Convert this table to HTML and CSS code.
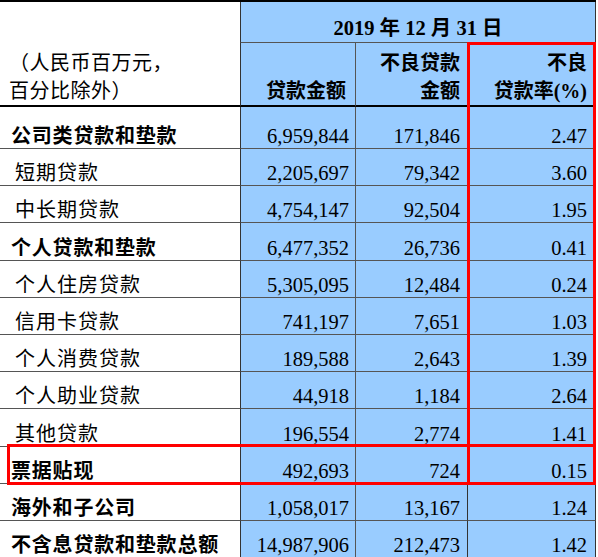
FILE: index.html
```html
<!DOCTYPE html>
<html lang="zh-CN">
<head>
    <meta charset="UTF-8">
    <meta name="viewport" content="width=device-width, initial-scale=1.0">
    <title>贷款质量</title>
    <link rel="stylesheet" href="styles.css">
</head>
<body>
    <div class="sheet">
        <div class="grid">
            <!-- Header -->
            <div class="cell head-label">（人民币百万元，<br>百分比除外）</div>
            <div class="cell blue date">2019 年 12 月 31 日</div>
            <div class="cell blue head c1">贷款金额</div>
            <div class="cell blue head c2">不良贷款<br>金额</div>
            <div class="cell blue head c3">不良<br>贷款率(%)</div>

            <!-- Rows -->
            <div class="cell label bold">公司类贷款和垫款</div>
            <div class="cell blue num c1">6,959,844</div>
            <div class="cell blue num c2">171,846</div>
            <div class="cell blue num c3">2.47</div>

            <div class="cell label">短期贷款</div>
            <div class="cell blue num c1">2,205,697</div>
            <div class="cell blue num c2">79,342</div>
            <div class="cell blue num c3">3.60</div>

            <div class="cell label">中长期贷款</div>
            <div class="cell blue num c1">4,754,147</div>
            <div class="cell blue num c2">92,504</div>
            <div class="cell blue num c3">1.95</div>

            <div class="cell label bold">个人贷款和垫款</div>
            <div class="cell blue num c1">6,477,352</div>
            <div class="cell blue num c2">26,736</div>
            <div class="cell blue num c3">0.41</div>

            <div class="cell label">个人住房贷款</div>
            <div class="cell blue num c1">5,305,095</div>
            <div class="cell blue num c2">12,484</div>
            <div class="cell blue num c3">0.24</div>

            <div class="cell label">信用卡贷款</div>
            <div class="cell blue num c1">741,197</div>
            <div class="cell blue num c2">7,651</div>
            <div class="cell blue num c3">1.03</div>

            <div class="cell label">个人消费贷款</div>
            <div class="cell blue num c1">189,588</div>
            <div class="cell blue num c2">2,643</div>
            <div class="cell blue num c3">1.39</div>

            <div class="cell label">个人助业贷款</div>
            <div class="cell blue num c1">44,918</div>
            <div class="cell blue num c2">1,184</div>
            <div class="cell blue num c3">2.64</div>

            <div class="cell label">其他贷款</div>
            <div class="cell blue num c1">196,554</div>
            <div class="cell blue num c2">2,774</div>
            <div class="cell blue num c3">1.41</div>

            <div class="cell label bold">票据贴现</div>
            <div class="cell blue num c1">492,693</div>
            <div class="cell blue num c2">724</div>
            <div class="cell blue num c3">0.15</div>

            <div class="cell label bold">海外和子公司</div>
            <div class="cell blue num c1">1,058,017</div>
            <div class="cell blue num c2">13,167</div>
            <div class="cell blue num c3">1.24</div>

            <div class="cell label bold last">不含息贷款和垫款总额</div>
            <div class="cell blue num c1 last">14,987,906</div>
            <div class="cell blue num c2 last">212,473</div>
            <div class="cell blue num c3 last">1.42</div>
        </div>

        <!-- Red highlight boxes -->
        <div class="mark mark-col"></div>
        <div class="mark mark-row"></div>
    </div>
</body>
</html>
```

FILE: styles.css
```css
/* Base */
* {
    margin: 0;
    padding: 0;
    box-sizing: border-box;
}

body {
    background-color: #fff;
    color: #000;
    font-family: "Liberation Serif", "Noto Sans CJK SC", serif;
}

.sheet {
    position: relative;
    width: 598px;
    height: 557px;
    overflow: hidden;
}

/* Grid */
.grid {
    display: grid;
    grid-template-columns: 240px 115px 112px 129px;
    grid-template-rows: 41px 64px 42px 37px 37px 38px 37px 37px 37px 37px 38px 37px 37px 36px;
    width: 596px;
    border-top: 2px solid #000;
}

.cell {
    display: flex;
    align-items: flex-end;
    border-bottom: 1px solid #555;
    font-size: 20px;
    line-height: 24px;
    white-space: nowrap;
}

.cell.last {
    border-bottom: none;
}

.blue {
    background-color: #99ccff;
    justify-content: flex-end;
    text-align: right;
}

.c1 {
    border-left: 1px solid #333;
    padding-right: 6px;
}

.c2 {
    border-left: 1px solid #555;
    padding-right: 7px;
}

.c3 {
    border-left: 1px solid #333;
    border-right: 1px solid #333;
    padding-right: 8px;
}

/* Header */
.head-label {
    grid-row: 1 / 3;
    border-bottom: 2px solid #000;
    padding: 0 0 0 9px;
    line-height: 28px;
    letter-spacing: 0.5px;
}

.date {
    grid-column: 2 / 5;
    justify-content: center;
    border-left: 1px solid #333;
    border-right: 1px solid #333;
    font-weight: bold;
    font-size: 20.5px;
    padding-bottom: 2px;
}

.head {
    border-bottom: 2px solid #000;
    font-weight: bold;
    line-height: 28px;
}

.head.c1 {
    padding-right: 9px;
}

/* Body */
.label {
    padding-left: 15px;
    letter-spacing: 1px;
}

.label.bold {
    padding-left: 11px;
    font-weight: bold;
    letter-spacing: 0.8px;
}

.num {
    font-size: 20.5px;
}

/* Highlights */
.mark {
    position: absolute;
    border: 3px solid #f00;
}

.mark-col {
    left: 467px;
    top: 42px;
    width: 129px;
    height: 443px;
}

.mark-row {
    left: 7px;
    top: 444px;
    width: 589px;
    height: 41px;
}
```
